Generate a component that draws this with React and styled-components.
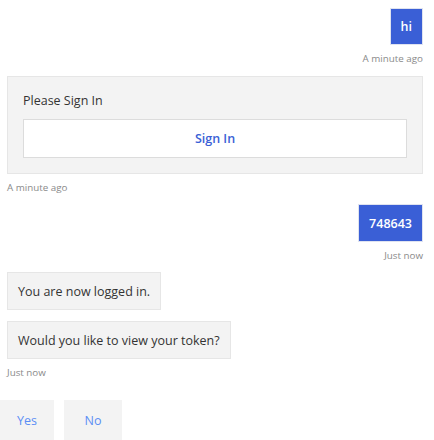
import React from 'react';
import styled, { createGlobalStyle } from 'styled-components';

const GlobalStyle = createGlobalStyle`
  body {
    margin: 0;
    background: #fff;
    font-family: "Open Sans", "Noto Sans", sans-serif;
  }
`;

const Transcript = styled.div`
  width: 434px;
  height: 440px;
  overflow: hidden;
  display: flex;
  flex-direction: column;
  padding: 8px 11px 0 7px;
  box-sizing: border-box;
`;

const Row = styled.div`
  display: flex;
  justify-content: ${p => (p.$fromUser ? 'flex-end' : 'flex-start')};
  margin-top: ${p => p.$top || 0}px;
`;

const Bubble = styled.div`
  box-sizing: border-box;
  height: ${p => p.$h || 38}px;
  padding: 0 10px;
  display: flex;
  align-items: center;
  font-size: 12.5px;
  border: 1px solid ${p => (p.$fromUser ? '#dfe3f0' : '#e6e6e6')};
  background: ${p => (p.$fromUser ? '#3a5fd6' : '#f3f3f3')};
  color: ${p => (p.$fromUser ? '#fff' : '#333')};
  font-weight: ${p => (p.$fromUser ? 600 : 400)};
`;

const Stamp = styled.div`
  font-size: 9.8px;
  color: #8a8a8a;
  line-height: 12px;
`;

const Card = styled.div`
  box-sizing: border-box;
  width: 417px;
  background: #f3f3f3;
  border: 1px solid #e6e6e6;
  padding: 15px;
`;

const CardTitle = styled.div`
  font-size: 12.5px;
  color: #333;
  line-height: 18px;
  margin-bottom: 9px;
`;

const SignInButton = styled.button`
  width: 100%;
  height: 39px;
  background: #fff;
  border: 1px solid #dcdcdc;
  color: #3a5fd6;
  font-family: inherit;
  font-size: 12.5px;
  font-weight: 600;
  cursor: pointer;
`;

const Suggestions = styled.div`
  display: flex;
  gap: 10px;
  margin-left: -7px;
  margin-top: 21px;
`;

const Suggestion = styled.button`
  height: 40px;
  width: ${p => p.$w}px;
  border: none;
  background: #f3f3f3;
  color: #5b8ef5;
  font-family: inherit;
  font-size: 12.5px;
  cursor: pointer;
`;

export default function App() {
  return (
    <>
      <GlobalStyle />
      <Transcript>
        <Row $fromUser>
          <Bubble $fromUser $h={37}>hi</Bubble>
        </Row>
        <Row $fromUser $top={8}>
          <Stamp>A minute ago</Stamp>
        </Row>
        <Row $top={11}>
          <Card>
            <CardTitle>Please Sign In</CardTitle>
            <SignInButton>Sign In</SignInButton>
          </Card>
        </Row>
        <Row $top={8}>
          <Stamp>A minute ago</Stamp>
        </Row>
        <Row $fromUser $top={10}>
          <Bubble $fromUser>748643</Bubble>
        </Row>
        <Row $fromUser $top={8}>
          <Stamp>Just now</Stamp>
        </Row>
        <Row $top={10}>
          <Bubble>You are now logged in.</Bubble>
        </Row>
        <Row $top={11}>
          <Bubble>Would you like to view your token?</Bubble>
        </Row>
        <Row $top={8}>
          <Stamp>Just now</Stamp>
        </Row>
        <Suggestions>
          <Suggestion $w={54}>Yes</Suggestion>
          <Suggestion $w={58}>No</Suggestion>
        </Suggestions>
      </Transcript>
    </>
  );
}
